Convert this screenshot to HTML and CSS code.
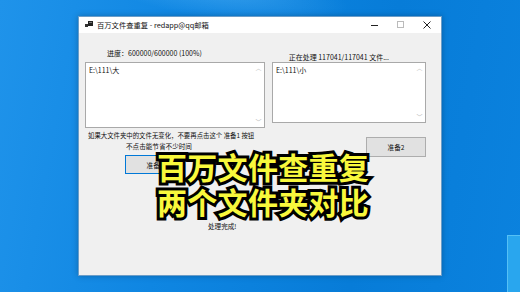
FILE: index.html
```html
<!DOCTYPE html>
<html lang="zh-CN">
<head>
<meta charset="utf-8">
<title>百万文件查重复</title>
<link rel="stylesheet" href="styles.css">
</head>
<body>
<div class="desktop">
  <div class="streak"></div>
  <div class="pane"></div>
  <div class="window">
    <div class="titlebar">
      <svg class="app-icon" width="8" height="8" viewBox="0 0 8 8"><rect x="0" y="3" width="3" height="3" fill="#333"/><rect x="3" y="0" width="5" height="5" fill="#222"/><rect x="4" y="1" width="3" height="1" fill="#777"/></svg>
      <span class="title">百万文件查重复 - redapp@qq邮箱</span>
      <div class="controls">
        <svg class="ctl" width="26" height="16" viewBox="0 0 26 16"><line x1="9" y1="8.5" x2="16" y2="8.5" stroke="#222" stroke-width="1"/></svg>
        <svg class="ctl" width="26" height="16" viewBox="0 0 26 16"><rect x="9.5" y="4.5" width="6" height="6" fill="none" stroke="#bbb" stroke-width="1"/></svg>
        <svg class="ctl" width="26" height="16" viewBox="0 0 26 16"><path d="M9.5 4.5 L16.5 11.5 M16.5 4.5 L9.5 11.5" stroke="#222" stroke-width="1"/></svg>
      </div>
    </div>
    <div class="client">
      <div class="labels">
        <span class="lbl-progress">进度：600000/600000 (100%)</span>
        <span class="lbl-status">正在处理 117041/117041 文件...</span>
      </div>
      <div class="boxes">
        <div class="textbox big">
          <span class="tb-text">E:\111\大</span>
          <div class="scroll"><span class="arr">︿</span><span class="arr">﹀</span></div>
        </div>
        <div class="textbox small">
          <span class="tb-text">E:\111\小</span>
          <div class="scroll"><span class="arr">︿</span><span class="arr">﹀</span></div>
        </div>
      </div>
      <div class="actions">
        <div class="left-col">
          <p class="note1">如果大文件夹中的文件无变化，不要再点击这个 准备1 按钮</p>
          <p class="note2">不点击能节省不少时间</p>
          <div class="btn focused">准备1</div>
        </div>
        <div class="right-col">
          <div class="btn">准备2</div>
        </div>
      </div>
      <p class="done">处理完成!</p>
    </div>
    <div class="overlay">
      <span>百万文件查重复</span>
      <span>两个文件夹对比</span>
    </div>
  </div>
</div>
</body>
</html>
```
FILE: styles.css
```css
* { box-sizing: border-box; }
html, body { margin: 0; padding: 0; }
body {
  width: 520px;
  height: 292px;
  overflow: hidden;
  font-family: "Noto Sans CJK SC", "Noto Sans", sans-serif;
}
.desktop {
  position: relative;
  width: 520px;
  height: 292px;
  overflow: hidden;
  background: linear-gradient(100deg, #1f93ea 0%, #0f86e2 35%, #077cd8 70%, #0b82de 100%);
}
.streak {
  position: absolute;
  left: 90px;
  top: -40px;
  width: 260px;
  height: 60px;
  transform: rotate(8deg);
  background: radial-gradient(ellipse at center, rgba(120,200,255,0.35), rgba(120,200,255,0) 70%);
}
.pane {
  position: absolute;
  left: 507px;
  top: 235px;
  width: 40px;
  height: 80px;
  background: #29a6ee;
  border-left: 1px solid #55c0f5;
  border-top: 1px solid #55c0f5;
}
.window {
  position: absolute;
  left: 78px;
  top: 16px;
  width: 364px;
  height: 260px;
  background: #f0f0f0;
  border: 1px solid #6b9dc8;
  box-shadow: 0 0 6px rgba(0,0,0,0.25);
  display: flex;
  flex-direction: column;
}
.titlebar {
  height: 16px;
  background: #fff;
  display: flex;
  align-items: center;
  padding-left: 6px;
  flex-shrink: 0;
}
.app-icon { margin-right: 4px; }
.title {
  font-size: 7.3px;
  color: #111;
  line-height: 10px;
}
.controls {
  margin-left: auto;
  display: flex;
  margin-right: 1px;
}
.ctl { display: block; }
.client {
  flex: 1;
  font-size: 7px;
  color: #111;
  line-height: 10px;
}
.labels {
  height: 29px;
  display: flex;
}
.lbl-progress { margin-left: 28px; margin-top: 15px; }
.lbl-status { margin-left: auto; margin-right: 52px; margin-top: 19px; }
.boxes {
  display: flex;
  align-items: flex-start;
  gap: 7px;
  margin-left: 6px;
}
.textbox {
  position: relative;
  background: #fff;
  border: 1px solid #a9a9a9;
  padding: 2px 3px;
}
.textbox.big { width: 180px; height: 66px; }
.textbox.small { width: 154px; height: 61px; }
.tb-text { font-size: 7px; line-height: 10px; }
.scroll {
  position: absolute;
  right: 1px;
  top: 1px;
  bottom: 1px;
  width: 9px;
  display: flex;
  flex-direction: column;
  justify-content: space-between;
  align-items: center;
}
.arr {
  font-size: 6px;
  line-height: 8px;
  color: #b8b8b8;
}
.actions {
  display: flex;
  align-items: flex-start;
}
.left-col {
  width: 287px;
  padding-left: 9px;
}
.note1 { margin: 3px 0 0 0; font-size: 6.4px; }
.note2 { margin: 0 0 0 38px; font-size: 6.6px; }
.btn {
  width: 60px;
  height: 20px;
  background: #e1e1e1;
  border: 1px solid #adadad;
  display: flex;
  align-items: center;
  justify-content: center;
  font-size: 6.6px;
}
.left-col .btn { margin: 4px 0 0 37px; height: 19px; }
.btn.focused { border-color: #0078d7; }
.right-col { margin-top: 9px; }
.done {
  margin: 47px 0 0 129px;
  font-size: 6.6px;
}
.overlay {
  position: absolute;
  left: 78px;
  top: 132px;
  display: flex;
  flex-direction: column;
  font-family: "Noto Sans CJK SC", sans-serif;
  font-weight: 700;
  font-size: 30px;
  line-height: 35px;
  color: #f8f83c;
  -webkit-text-stroke: 6px #000;
  paint-order: stroke fill;
  letter-spacing: 0.3px;
}
```
